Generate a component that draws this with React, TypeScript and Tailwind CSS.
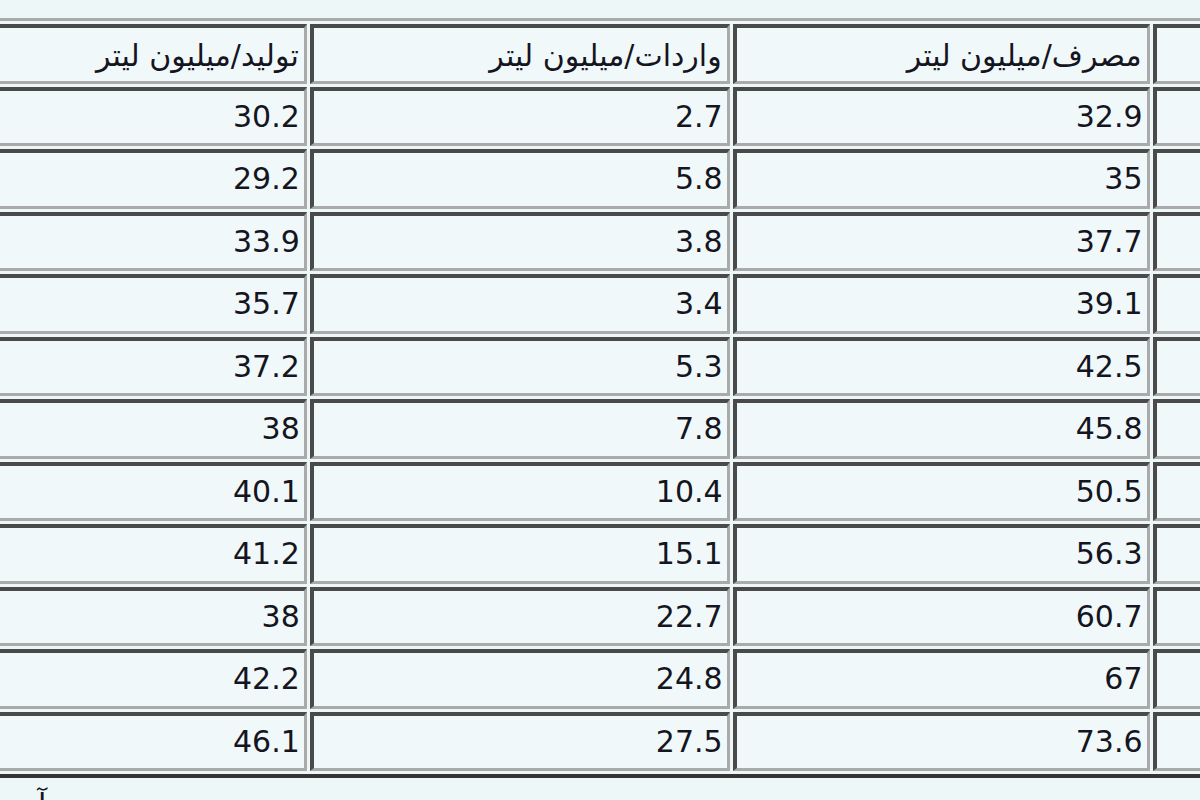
const headers = ['تولید/میلیون لیتر', 'واردات/میلیون لیتر', 'مصرف/میلیون لیتر'];

const rows: [string, string, string][] = [
  ['30.2', '2.7', '32.9'],
  ['29.2', '5.8', '35'],
  ['33.9', '3.8', '37.7'],
  ['35.7', '3.4', '39.1'],
  ['37.2', '5.3', '42.5'],
  ['38', '7.8', '45.8'],
  ['40.1', '10.4', '50.5'],
  ['41.2', '15.1', '56.3'],
  ['38', '22.7', '60.7'],
  ['42.2', '24.8', '67'],
  ['46.1', '27.5', '73.6'],
];

const cell =
  'h-[59.5px] border-t-[4px] border-l-[4px] border-b-[3px] border-r-[3px] border-t-[#4a4a4a] border-l-[#4a4a4a] border-b-[#aaaaaa] border-r-[#aaaaaa] bg-[#f0f8f9] pr-1 text-right align-middle whitespace-nowrap';

export default function App() {
  return (
    <div
      className="w-[1200px] h-[800px] overflow-hidden bg-[#eef7f8] text-[#15151f]"
      style={{ fontFamily: '"DejaVu Sans", Tahoma, sans-serif' }}
    >
      <table className="mt-[18px] ml-[-60px] w-[1420px] table-fixed border-separate border-spacing-[3px] border-t-[3px] border-l-[3px] border-b-[4px] border-r-[4px] border-t-[#aaaaaa] border-l-[#aaaaaa] border-b-[#353535] border-r-[#353535] text-[30px] leading-none">
        <colgroup>
          <col className="w-[360px]" />
          <col className="w-[419px]" />
          <col className="w-[416px]" />
          <col className="w-[200px]" />
        </colgroup>
        <thead>
          <tr>
            {headers.map((h) => (
              <td key={h} dir="rtl" className={cell + ' pt-[4px]'}>
                <span dir="rtl">{h}</span>
              </td>
            ))}
            <td className={cell}></td>
          </tr>
        </thead>
        <tbody>
          {rows.map((r, i) => (
            <tr key={i}>
              {r.map((v, j) => (
                <td key={j} className={cell}>
                  {v}
                </td>
              ))}
              <td className={cell}></td>
            </tr>
          ))}
        </tbody>
      </table>
      {/* next paragraph, only its first line's top is visible */}
      <div className="pl-[38px] pt-[12px] text-[30px] leading-none" dir="ltr">
        آ
      </div>
    </div>
  );
}
